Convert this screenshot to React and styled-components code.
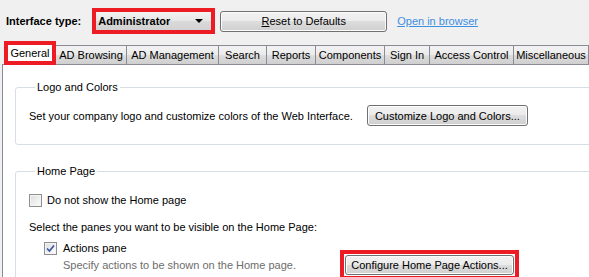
import styled, { createGlobalStyle } from "styled-components";

const GlobalStyle = createGlobalStyle`
  html, body {
    margin: 0;
    padding: 0;
    background: #f0f0f0;
    overflow: hidden;
  }
  body {
    font-family: "Liberation Sans", Arial, sans-serif;
    font-size: 11px;
    color: #000;
  }
`;

const Page = styled.div`
  width: 589px;
  height: 277px;
  overflow: hidden;
  background: #f0f0f0;
`;

const TopBar = styled.div`
  display: flex;
  align-items: center;
  height: 26px;
  padding: 8px 0 0 6px;
`;

const Label = styled.span`
  font-weight: bold;
  margin-right: 11px;
`;

const Highlight = styled.div`
  display: flex;
  border: 4px solid #ed1c24;
  padding: ${(p) => p.$pad || 0}px;
  margin-left: ${(p) => p.$ml || 0}px;
  margin-top: ${(p) => p.$mt || 0}px;
  background: #fff;
`;

const Combo = styled.div`
  display: flex;
  align-items: center;
  justify-content: space-between;
  width: 115px;
  height: 18px;
  padding: 0 8px 0 2px;
  box-sizing: border-box;
  background: linear-gradient(#f2f2f2, #e6e6e6 50%, #dadada 51%, #d2d2d2);
  font-weight: bold;
`;

const Arrow = styled.span`
  width: 0;
  height: 0;
  border-left: 4px solid transparent;
  border-right: 4px solid transparent;
  border-top: 4px solid #000;
`;

const Button = styled.button`
  width: ${(p) => p.$w}px;
  height: ${(p) => p.$h || 21}px;
  margin-left: ${(p) => p.$ml || 0}px;
  padding: 0;
  border: 1px solid #707070;
  border-radius: 3px;
  background: linear-gradient(#f2f2f2, #ebebeb 49%, #dddddd 50%, #cfcfcf);
  box-shadow: inset 0 0 0 1px #fcfcfc;
  font-family: "Liberation Sans", Arial, sans-serif;
  font-size: 11px;
  color: #000;
  white-space: nowrap;
  flex-shrink: 0;

  u {
    text-decoration: underline;
  }
`;

const Link = styled.a`
  margin-left: 10px;
  color: #3d8fe3;
  text-decoration: underline;
`;

const TabStrip = styled.div`
  display: flex;
  align-items: flex-end;
  height: 24px;
  margin: 6px 0 0 4px;
`;

const Tab = styled.div`
  display: flex;
  align-items: center;
  justify-content: center;
  box-sizing: border-box;
  width: ${(p) => p.$w}px;
  height: ${(p) => (p.$active ? 16 : 19)}px;
  border: ${(p) => (p.$active ? "none" : "1px solid #898c95")};
  border-bottom: none;
  margin-left: ${(p) => (p.$active ? 0 : -1)}px;
  background: ${(p) =>
    p.$active ? "#fff" : "linear-gradient(#f2f2f2, #ebebeb 50%, #dddddd 51%, #cfcfcf)"};
  white-space: nowrap;
  flex-shrink: 0;
`;

const ActiveWrap = styled(Highlight)`
  margin-bottom: -1px;
  position: relative;
  z-index: 1;
`;

const Panel = styled.div`
  margin-left: 2px;
  height: 220px;
  background: #fff;
  border-top: 1px solid #898c95;
  border-left: 1px solid #898c95;
  padding: 15px 0 0 12px;
`;

const Group = styled.fieldset`
  margin: ${(p) => p.$mt || 0}px -20px 0 0;
  padding: ${(p) => p.$pt}px 0 ${(p) => p.$pb}px 13px;
  border: 1px solid #d5dfe5;
  border-radius: 3px;
  min-width: 0;
`;

const Legend = styled.legend`
  margin-left: 6px;
  padding: 0 2px;
  line-height: 14px;
`;

const Row = styled.div`
  display: flex;
  align-items: ${(p) => p.$align || "center"};
  gap: ${(p) => p.$gap || 0}px;
  margin-top: ${(p) => p.$mt || 0}px;
  padding-left: ${(p) => p.$indent || 0}px;
  min-height: 16px;
`;

const Text = styled.span`
  color: ${(p) => p.$color || "#000"};
  white-space: nowrap;
`;

const Column = styled.div`
  display: flex;
  flex-direction: column;
  width: ${(p) => p.$w}px;
  flex-shrink: 0;
`;

const Box = styled.span`
  display: flex;
  align-items: center;
  justify-content: center;
  width: 13px;
  height: 13px;
  box-sizing: border-box;
  border: 1px solid #8e8f8f;
  background: linear-gradient(135deg, #dcdcdc, #f4f4f4 70%, #fdfdfd);
  box-shadow: inset 0 0 0 1px #f4f4f4;
  flex-shrink: 0;
`;

const CheckBox = ({ checked }) => (
  <Box>
    {checked && (
      <svg width="9" height="9" viewBox="0 0 9 9">
        <path d="M1 4.5 L3.5 7 L8 1.5" fill="none" stroke="#3a56a8" strokeWidth="1.7" />
      </svg>
    )}
  </Box>
);

const tabs = [
  ["AD Browsing", 72],
  ["AD Management", 93],
  ["Search", 49],
  ["Reports", 50],
  ["Components", 70],
  ["Sign In", 46],
  ["Access Control", 85],
  ["Miscellaneous", 76],
];

export default function App() {
  return (
    <Page>
      <GlobalStyle />
      <TopBar>
        <Label>Interface type:</Label>
        <Highlight>
          <Combo>
            Administrator
            <Arrow />
          </Combo>
        </Highlight>
        <Button $w={167} $h={21} $ml={5}>
          <u>R</u>eset to Defaults
        </Button>
        <Link>Open in browser</Link>
      </TopBar>

      <TabStrip>
        <ActiveWrap>
          <Tab $active $w={44}>General</Tab>
        </ActiveWrap>
        {tabs.map(([name, w]) => (
          <Tab key={name} $w={w}>{name}</Tab>
        ))}
      </TabStrip>

      <Panel>
        <Group $pt={11} $pb={18}>
          <Legend>Logo and Colors</Legend>
          <Row>
            <Text>Set your company logo and customize colors of the Web Interface.</Text>
            <Button $w={161} $ml={14}>Customize Logo and Colors...</Button>
          </Row>
        </Group>

        <Group $mt={19} $pt={14} $pb={10}>
          <Legend>Home Page</Legend>
          <Row $gap={5}>
            <CheckBox />
            <Text>Do not show the Home page</Text>
          </Row>
          <Row $mt={11}>
            <Text>Select the panes you want to be visible on the Home Page:</Text>
          </Row>
          <Row $mt={5} $indent={15} $align="flex-start">
            <Column $w={296}>
              <Row $gap={6}>
                <CheckBox checked />
                <Text>Actions pane</Text>
              </Row>
              <Row $mt={1} $indent={19}>
                <Text $color="#6d6d6d">Specify actions to be shown on the Home page.</Text>
              </Row>
            </Column>
            <Highlight $mt={10} $pad={1}>
              <Button $w={169} $h={20}>Configure Home Page Actions...</Button>
            </Highlight>
          </Row>
        </Group>
      </Panel>
    </Page>
  );
}
